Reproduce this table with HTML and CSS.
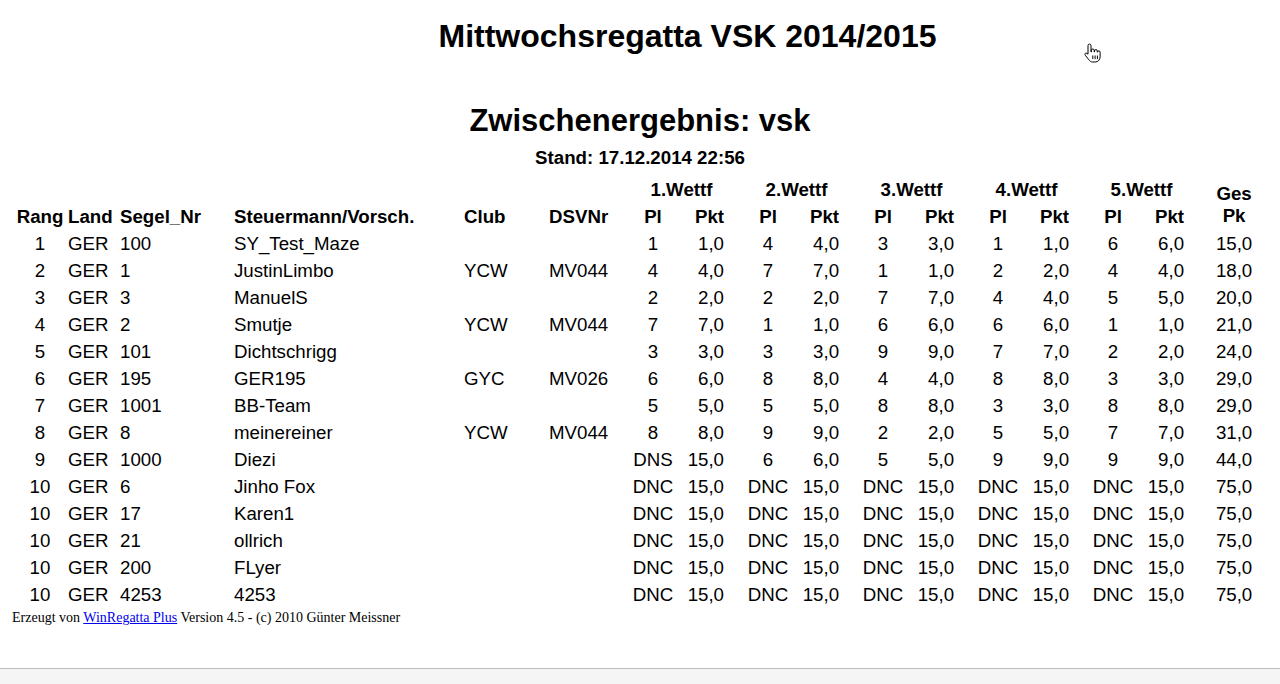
FILE: index.html
```html
<!DOCTYPE html>
<html lang="de">
<head>
<meta charset="utf-8">
<title>Mittwochsregatta VSK 2014/2015</title>
<link rel="stylesheet" href="styles.css">
</head>
<body>
<div class="page">
  <h1 class="title">Mittwochsregatta VSK 2014/2015</h1>
  <h2 class="subtitle">Zwischenergebnis: vsk</h2>
  <p class="stand">Stand: 17.12.2014 22:56</p>

  <table class="results">
    <colgroup>
      <col class="c-rang"><col class="c-land"><col class="c-segel"><col class="c-name"><col class="c-club"><col class="c-dsv">
      <col class="c-pl"><col class="c-pkt"><col class="c-pl"><col class="c-pkt"><col class="c-pl"><col class="c-pkt">
      <col class="c-pl"><col class="c-pkt"><col class="c-pl"><col class="c-pkt"><col class="c-ges">
    </colgroup>
    <thead>
      <tr class="group-row">
        <th colspan="6"></th>
        <th colspan="2" class="wettf">1.Wettf</th>
        <th colspan="2" class="wettf">2.Wettf</th>
        <th colspan="2" class="wettf">3.Wettf</th>
        <th colspan="2" class="wettf">4.Wettf</th>
        <th colspan="2" class="wettf">5.Wettf</th>
        <th rowspan="2" class="ges-head">Ges<br>Pk</th>
      </tr>
      <tr class="col-row">
        <th>Rang</th><th>Land</th><th>Segel_Nr</th><th>Steuermann/Vorsch.</th><th>Club</th><th>DSVNr</th>
        <th>Pl</th><th>Pkt</th><th>Pl</th><th>Pkt</th><th>Pl</th><th>Pkt</th><th>Pl</th><th>Pkt</th><th>Pl</th><th>Pkt</th>
      </tr>
    </thead>
    <tbody>
      <tr><td>1</td><td>GER</td><td>100</td><td>SY_Test_Maze</td><td></td><td></td><td>1</td><td>1,0</td><td>4</td><td>4,0</td><td>3</td><td>3,0</td><td>1</td><td>1,0</td><td>6</td><td>6,0</td><td>15,0</td></tr>
      <tr><td>2</td><td>GER</td><td>1</td><td>JustinLimbo</td><td>YCW</td><td>MV044</td><td>4</td><td>4,0</td><td>7</td><td>7,0</td><td>1</td><td>1,0</td><td>2</td><td>2,0</td><td>4</td><td>4,0</td><td>18,0</td></tr>
      <tr><td>3</td><td>GER</td><td>3</td><td>ManuelS</td><td></td><td></td><td>2</td><td>2,0</td><td>2</td><td>2,0</td><td>7</td><td>7,0</td><td>4</td><td>4,0</td><td>5</td><td>5,0</td><td>20,0</td></tr>
      <tr><td>4</td><td>GER</td><td>2</td><td>Smutje</td><td>YCW</td><td>MV044</td><td>7</td><td>7,0</td><td>1</td><td>1,0</td><td>6</td><td>6,0</td><td>6</td><td>6,0</td><td>1</td><td>1,0</td><td>21,0</td></tr>
      <tr><td>5</td><td>GER</td><td>101</td><td>Dichtschrigg</td><td></td><td></td><td>3</td><td>3,0</td><td>3</td><td>3,0</td><td>9</td><td>9,0</td><td>7</td><td>7,0</td><td>2</td><td>2,0</td><td>24,0</td></tr>
      <tr><td>6</td><td>GER</td><td>195</td><td>GER195</td><td>GYC</td><td>MV026</td><td>6</td><td>6,0</td><td>8</td><td>8,0</td><td>4</td><td>4,0</td><td>8</td><td>8,0</td><td>3</td><td>3,0</td><td>29,0</td></tr>
      <tr><td>7</td><td>GER</td><td>1001</td><td>BB-Team</td><td></td><td></td><td>5</td><td>5,0</td><td>5</td><td>5,0</td><td>8</td><td>8,0</td><td>3</td><td>3,0</td><td>8</td><td>8,0</td><td>29,0</td></tr>
      <tr><td>8</td><td>GER</td><td>8</td><td>meinereiner</td><td>YCW</td><td>MV044</td><td>8</td><td>8,0</td><td>9</td><td>9,0</td><td>2</td><td>2,0</td><td>5</td><td>5,0</td><td>7</td><td>7,0</td><td>31,0</td></tr>
      <tr><td>9</td><td>GER</td><td>1000</td><td>Diezi</td><td></td><td></td><td>DNS</td><td>15,0</td><td>6</td><td>6,0</td><td>5</td><td>5,0</td><td>9</td><td>9,0</td><td>9</td><td>9,0</td><td>44,0</td></tr>
      <tr><td>10</td><td>GER</td><td>6</td><td>Jinho Fox</td><td></td><td></td><td>DNC</td><td>15,0</td><td>DNC</td><td>15,0</td><td>DNC</td><td>15,0</td><td>DNC</td><td>15,0</td><td>DNC</td><td>15,0</td><td>75,0</td></tr>
      <tr><td>10</td><td>GER</td><td>17</td><td>Karen1</td><td></td><td></td><td>DNC</td><td>15,0</td><td>DNC</td><td>15,0</td><td>DNC</td><td>15,0</td><td>DNC</td><td>15,0</td><td>DNC</td><td>15,0</td><td>75,0</td></tr>
      <tr><td>10</td><td>GER</td><td>21</td><td>ollrich</td><td></td><td></td><td>DNC</td><td>15,0</td><td>DNC</td><td>15,0</td><td>DNC</td><td>15,0</td><td>DNC</td><td>15,0</td><td>DNC</td><td>15,0</td><td>75,0</td></tr>
      <tr><td>10</td><td>GER</td><td>200</td><td>FLyer</td><td></td><td></td><td>DNC</td><td>15,0</td><td>DNC</td><td>15,0</td><td>DNC</td><td>15,0</td><td>DNC</td><td>15,0</td><td>DNC</td><td>15,0</td><td>75,0</td></tr>
      <tr><td>10</td><td>GER</td><td>4253</td><td>4253</td><td></td><td></td><td>DNC</td><td>15,0</td><td>DNC</td><td>15,0</td><td>DNC</td><td>15,0</td><td>DNC</td><td>15,0</td><td>DNC</td><td>15,0</td><td>75,0</td></tr>
    </tbody>
  </table>

  <p class="credit">Erzeugt von <a href="#">WinRegatta Plus</a> Version 4.5 - (c) 2010 Günter Meissner</p>
</div>
<div class="statusbar"></div>

<svg class="cursor" width="19" height="21" viewBox="0 0 19 21" aria-hidden="true">
  <path d="M5 2.6a1.5 1.5 0 0 1 3 0V9h.4V7.4a1.4 1.4 0 0 1 2.8 0V9h.3V8a1.4 1.4 0 0 1 2.8 0v1.2h.2a1.3 1.3 0 0 1 2.6 0v4.6c0 2.8-1.9 5.2-4.8 5.2H9.6c-1.7 0-2.8-.9-3.7-2.2L2.2 12.2c-.6-.9-.3-1.9.7-2.1.7-.1 1.3.3 2.100 1.1V2.6z" fill="#fff" stroke="#000" stroke-width="1" stroke-linejoin="round"/>
  <path d="M9.8 12.5v3.6M12.1 12.5v3.6M14.4 12.5v3.6" stroke="#000" stroke-width="1"/>
</svg>
</body>
</html>
```

FILE: styles.css
```css
html, body {
  margin: 0;
  padding: 0;
  background: #ffffff;
}

body {
  color: #000000;
  font-family: "Liberation Sans", Arial, Helvetica, sans-serif;
  overflow: hidden;
}

.page {
  display: flow-root;
}

.title {
  margin: 18px 0 0;
  padding-left: 95px;
  font-size: 32px;
  line-height: 36px;
  font-weight: bold;
  text-align: center;
}

.subtitle {
  margin: 49px 0 0;
  font-size: 31px;
  line-height: 36px;
  font-weight: bold;
  text-align: center;
}

.stand {
  margin: 7.5px 0 0;
  font-size: 18.7px;
  line-height: 22px;
  font-weight: bold;
  text-align: center;
}

.results {
  margin: 4.5px 0 0 12px;
  width: 1257px;
  border-collapse: collapse;
  table-layout: fixed;
  font-size: 18.7px;
}

.c-rang { width: 56px; }
.c-land { width: 52px; }
.c-segel { width: 114px; }
.c-name { width: 230px; }
.c-club { width: 85px; }
.c-dsv { width: 75px; }
.c-pl { width: 58px; }
.c-pkt { width: 57px; }
.c-ges { width: 70px; }

.results th,
.results td {
  padding: 6px 0 0;
  line-height: 21px;
  white-space: nowrap;
  text-align: left;
  vertical-align: top;
}

.results th {
  font-weight: bold;
}

.results td {
  font-weight: normal;
}

.results .wettf {
  text-align: center;
}

.results .ges-head {
  padding: 0;
  line-height: 22px;
  text-align: center;
  vertical-align: bottom;
}

/* Rang column */
.col-row th:nth-child(1),
.results tbody td:nth-child(1) {
  text-align: center;
}

/* Platz columns */
.col-row th:nth-child(7),
.col-row th:nth-child(9),
.col-row th:nth-child(11),
.col-row th:nth-child(13),
.col-row th:nth-child(15),
.results tbody td:nth-child(7),
.results tbody td:nth-child(9),
.results tbody td:nth-child(11),
.results tbody td:nth-child(13),
.results tbody td:nth-child(15) {
  text-align: center;
}

/* Punkte columns */
.col-row th:nth-child(8),
.col-row th:nth-child(10),
.col-row th:nth-child(12),
.col-row th:nth-child(14),
.col-row th:nth-child(16),
.results tbody td:nth-child(8),
.results tbody td:nth-child(10),
.results tbody td:nth-child(12),
.results tbody td:nth-child(14),
.results tbody td:nth-child(16) {
  text-align: right;
  padding-right: 15px;
}

/* Gesamt column */
.results tbody td:nth-child(17) {
  text-align: center;
}

.credit {
  margin: 5px 0 0 12px;
  font-family: "Liberation Serif", "Times New Roman", serif;
  font-size: 14px;
  line-height: 16px;
}

.credit a {
  color: #0000ee;
  text-decoration: underline;
}

.statusbar {
  margin-top: 42px;
  height: 15px;
  border-top: 1px solid #bcbcbc;
  background: #f5f5f5;
}

.cursor {
  position: absolute;
  left: 1083px;
  top: 43px;
}
```
